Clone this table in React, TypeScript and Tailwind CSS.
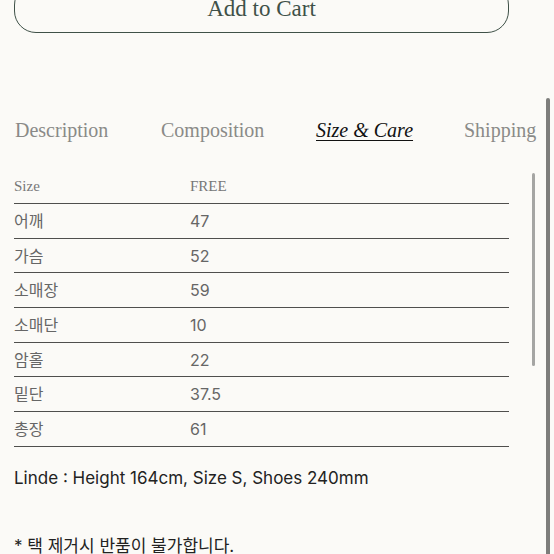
const rows: [string, string][] = [
  ['어깨', '47'],
  ['가슴', '52'],
  ['소매장', '59'],
  ['소매단', '10'],
  ['암홀', '22'],
  ['밑단', '37.5'],
  ['총장', '61'],
];

export default function App() {
  const serif = { fontFamily: '"Liberation Serif", "Noto Sans CJK KR", serif' };
  const sans = { fontFamily: 'Inter, "Noto Sans CJK KR", sans-serif' };
  return (
    <div className="relative w-[554px] h-[554px] overflow-hidden bg-[#fbfaf7]">
      {/* Add to cart */}
      <div className="px-[14px]">
        <button
          className="mt-[-17px] w-[495px] h-[50px] rounded-[22px] border-[1.5px] border-[#3f5148] text-[#3f5148] text-[23px] flex items-center justify-center pt-[3px]"
          style={serif}
        >
          Add to Cart
        </button>
      </div>

      {/* Tabs */}
      <div className="mt-[84px] flex items-center h-[26px] pl-[15px] text-[20px] text-[#8a8a88]" style={serif}>
        <span className="w-[146px]">Description</span>
        <span className="w-[155px]">Composition</span>
        <span className="w-[148px] italic underline underline-offset-[3px] decoration-1 text-[#111]">Size &amp; Care</span>
        <span>Shipping</span>
      </div>

      {/* Size table */}
      <div className="mt-[27px] mx-[14px] w-[495px]" style={sans}>
        <div className="flex items-center h-[34px] border-b-[1.5px] border-[#4f4f4d] text-[15px] text-[#777]" style={serif}>
          <span className="w-[176px]">Size</span>
          <span>FREE</span>
        </div>
        {rows.map(([label, value]) => (
          <div key={label} className="flex items-center h-[34.7px] border-b-[1.5px] border-[#4f4f4d] text-[16px] text-[#666]">
            <span className="w-[176px]">{label}</span>
            <span>{value}</span>
          </div>
        ))}
      </div>

      {/* Notes */}
      <div className="px-[14px] text-[17px] text-[#222]" style={sans}>
        <p className="mt-[20px] leading-[22px]">Linde : Height 164cm, Size S, Shoes 240mm</p>
        <p className="mt-[46px] leading-[22px]">* 택 제거시 반품이 불가합니다.</p>
      </div>

      {/* scrollbars */}
      <div className="absolute left-[546px] top-[98px] w-[4px] h-[470px] rounded-full bg-[#7d7d7b]" />
      <div className="absolute left-[532px] top-[173px] w-[3px] h-[193px] rounded-full bg-[#a5a5a3]" />
    </div>
  );
}
